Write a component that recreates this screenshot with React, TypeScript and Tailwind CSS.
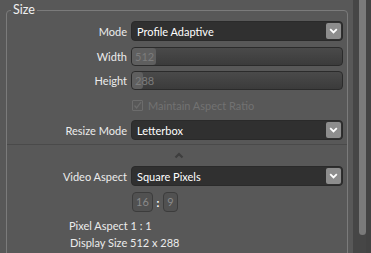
import { ReactNode } from "react";

const font = { fontFamily: 'Lato, "Open Sans", sans-serif' };

function Chevron() {
  return (
    <span className="w-[15px] h-[16px] rounded-[2px] bg-[#8d8d8d] flex items-center justify-center">
      <svg width="9" height="6" viewBox="0 0 9 6">
        <path d="M1.2 1.2 L4.5 4.4 L7.8 1.2" fill="none" stroke="#fff" strokeWidth="1.8" />
      </svg>
    </span>
  );
}

function Row({ label, children, className = "" }: { label?: string; children: ReactNode; className?: string }) {
  return (
    <div className={`flex items-center ${className}`}>
      <div className="w-[124px] pr-[4px] text-right text-[#ececec] text-[11px] leading-none whitespace-nowrap">
        {label}
      </div>
      <div className="flex-1 flex items-center">{children}</div>
    </div>
  );
}

function Select({ value }: { value: string }) {
  return (
    <div className="w-[212px] h-[20px] rounded-[4px] bg-[#303030] border border-[#2a2a2a] flex items-center justify-between pl-[5px] pr-[1px]">
      <span className="text-white text-[11px] leading-none">{value}</span>
      <Chevron />
    </div>
  );
}

function Slider({ value, fill }: { value: string; fill: number }) {
  return (
    <div className="w-[212px] h-[19px] rounded-[4px] border border-[#2b2b2b] bg-gradient-to-b from-[#4a4a4a] to-[#3b3b3b] flex items-center relative overflow-hidden">
      <div className="absolute left-0 top-0 bottom-0 rounded-[3px] bg-[#5f5f5f]" style={{ width: fill }} />
      <span className="relative pl-[3px] text-[#7c7c7c] text-[11px] leading-none">{value}</span>
    </div>
  );
}

export default function App() {
  return (
    <div className="w-[371px] h-[253px] bg-[#585858] flex overflow-hidden" style={font}>
      <div className="w-[353px] pl-[6px] pr-[5px] pt-[3px] shrink-0">
        <fieldset className="border border-[#7b7b7b] rounded-[4px] h-[262px] min-w-0">
          <legend className="ml-[4px] px-[2px] text-[#f0f0f0] text-[12.5px] leading-[14px]">Size</legend>

          <Row label="Mode" className="mt-[4px]">
            <Select value="Profile Adaptive" />
          </Row>
          <Row label="Width" className="mt-[6px]">
            <Slider value="512" fill={24} />
          </Row>
          <Row label="Height" className="mt-[5px]">
            <Slider value="288" fill={11} />
          </Row>
          <Row className="mt-[3px] h-[24px]">
            <div className="flex items-center gap-[5px] pl-[1px]">
              <span className="w-[11px] h-[11px] border border-[#6c6c6c] rounded-[1px] flex items-center justify-center">
                <svg width="9" height="9" viewBox="0 0 9 9">
                  <path d="M1.5 4.5 L3.6 7 L8 1.2" fill="none" stroke="#6c6c6c" strokeWidth="1.3" />
                </svg>
              </span>
              <span className="text-[#727272] text-[11px] leading-none">Maintain Aspect Ratio</span>
            </div>
          </Row>
          <Row label="Resize Mode" className="mt-[3px]">
            <Select value="Letterbox" />
          </Row>

          <div className="mt-[4px] border-t border-[#4a4a4a] border-b-[#626262] h-[1px]" />
          <div className="flex justify-center h-[21px] items-center pl-[4px]">
            <svg width="10" height="7" viewBox="0 0 10 7">
              <path d="M1.5 5.5 L5 2 L8.5 5.5" fill="none" stroke="#3e3e3e" strokeWidth="2.2" />
            </svg>
          </div>

          <Row label="Video Aspect">
            <Select value="Square Pixels" />
          </Row>
          <Row className="mt-[6px]">
            <div className="flex items-center pl-[1px]">
              <span className="w-[21px] h-[20px] rounded-[4px] border border-[#3c3c3c] bg-[#515151] text-[#8a8a8a] text-[11px] flex items-center justify-center">
                16
              </span>
              <span className="w-[10px] text-center text-white text-[11px] font-bold leading-none">:</span>
              <span className="w-[15px] h-[20px] rounded-[4px] border border-[#3c3c3c] bg-[#515151] text-[#8a8a8a] text-[11px] flex items-center justify-center">
                9
              </span>
            </div>
          </Row>
          <div className="mt-[5px] pl-[62px] text-[#ececec] text-[11px] leading-[17px]">Pixel Aspect 1 : 1</div>
          <div className="pl-[63px] text-[#ececec] text-[11px] leading-[17px]">Display Size 512 x 288</div>
        </fieldset>
      </div>
      <div className="flex-1 bg-[#464646] flex pl-[6px]">
        <div className="w-[7px] h-[239px] -mt-[4px] rounded-b-[4px] bg-[#7a7a7a]" />
        <div className="flex-1 bg-[#434343]" />
      </div>
    </div>
  );
}
